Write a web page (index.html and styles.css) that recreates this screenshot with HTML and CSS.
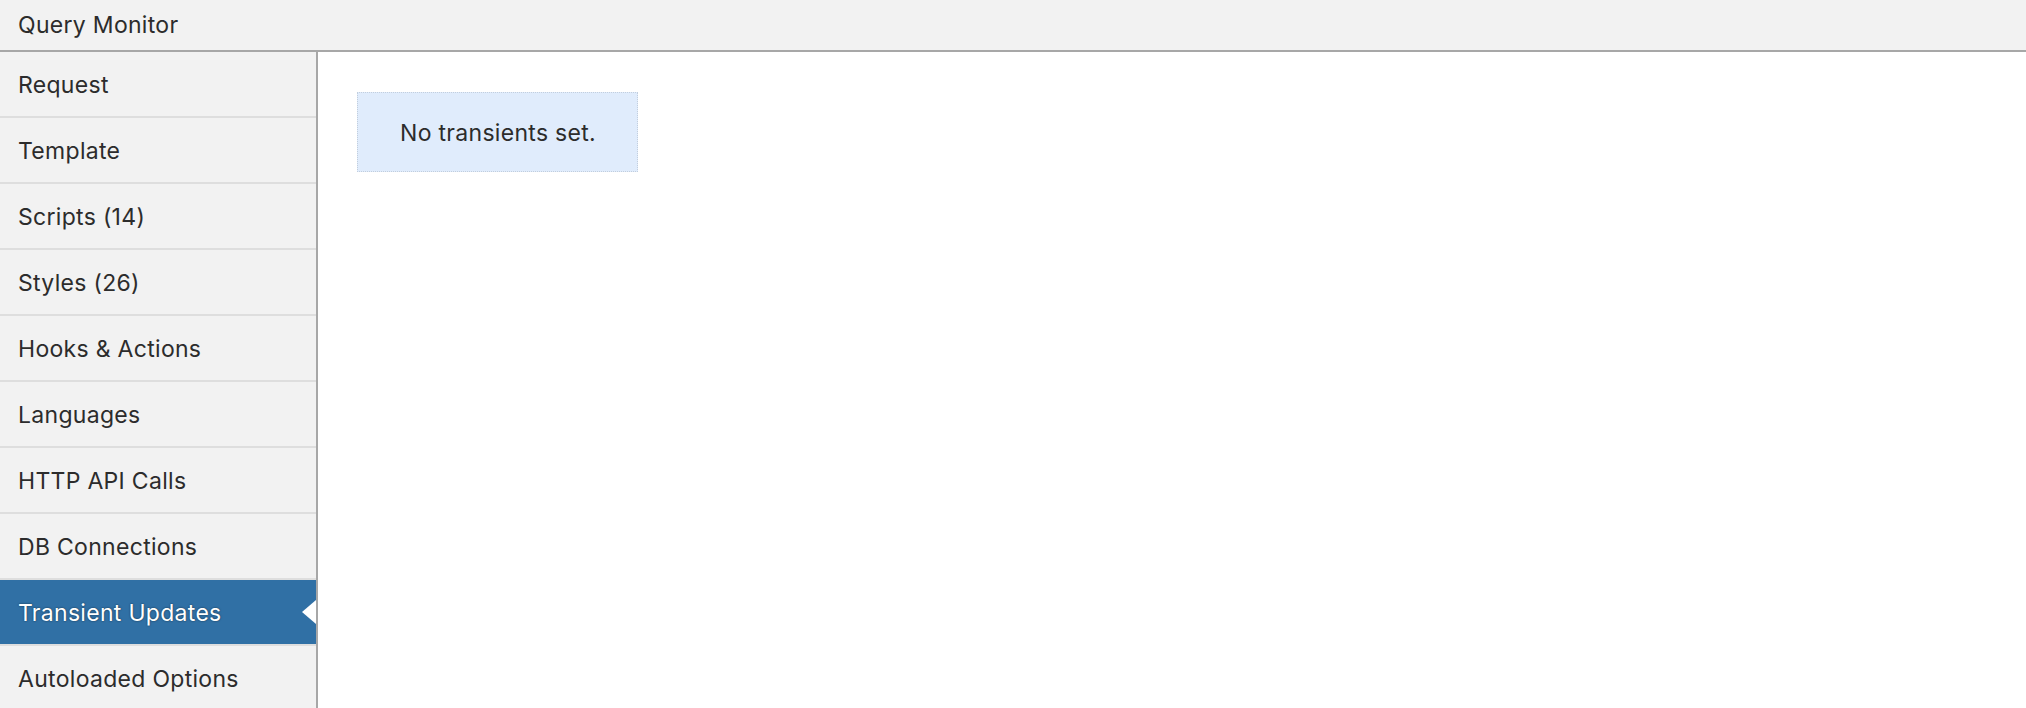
FILE: index.html
```html
<!DOCTYPE html>
<html lang="en">
<head>
  <meta charset="UTF-8" />
  <meta name="viewport" content="width=device-width, initial-scale=1.0"/>
  <title>Query Monitor</title>
  <link rel="stylesheet" href="styles.css">
</head>
<body>

  <div class="qm-title">Query Monitor</div>

  <div class="qm-main">
    <ul class="qm-nav">
      <li>Request</li>
      <li>Template</li>
      <li>Scripts (14)</li>
      <li>Styles (26)</li>
      <li>Hooks &amp; Actions</li>
      <li>Languages</li>
      <li>HTTP API Calls</li>
      <li>DB Connections</li>
      <li class="selected">Transient Updates</li>
      <li>Autoloaded Options</li>
    </ul>

    <div class="qm-panel">
      <div class="qm-notice">No transients set.</div>
    </div>
  </div>

</body>
</html>
```

FILE: styles.css
```css
body {
  margin: 0;
  font-family: Inter, 'Noto Sans', sans-serif;
  letter-spacing: 0.3px;
  color: #2c2c2c;
  background: white;
  overflow: hidden;
}
.qm-title {
  height: 49px;
  padding: 1px 0 0 18px;
  line-height: 49px;
  background: #f2f2f2;
  border-bottom: 2px solid #a7a7a7;
  font-size: 23px;
}
.qm-main {
  display: flex;
}
.qm-nav {
  list-style: none;
  margin: 0;
  padding: 0;
  width: 316px;
  flex-shrink: 0;
  background: #f2f2f2;
  border-right: 2px solid #a7a7a7;
}
.qm-nav li {
  position: relative;
  height: 63px;
  padding: 1px 0 0 18px;
  line-height: 64px;
  font-size: 23px;
  border-bottom: 2px solid #dedede;
}
.qm-nav li.selected {
  background: #3070a5;
  color: white;
  text-shadow: 0 0 2px rgba(0, 0, 0, 0.6);
}
.qm-nav li.selected::after {
  content: "";
  position: absolute;
  right: 0;
  top: 20px;
  border-top: 12px solid transparent;
  border-bottom: 12px solid transparent;
  border-right: 14px solid white;
}
.qm-panel {
  flex: 1;
  padding: 40px 39px;
}
.qm-notice {
  display: inline-block;
  padding: 1px 41px 0 42px;
  height: 77px;
  line-height: 78px;
  font-size: 23px;
  background: #e0ecfc;
  border: 1px dotted #c2cedd;
}
```
